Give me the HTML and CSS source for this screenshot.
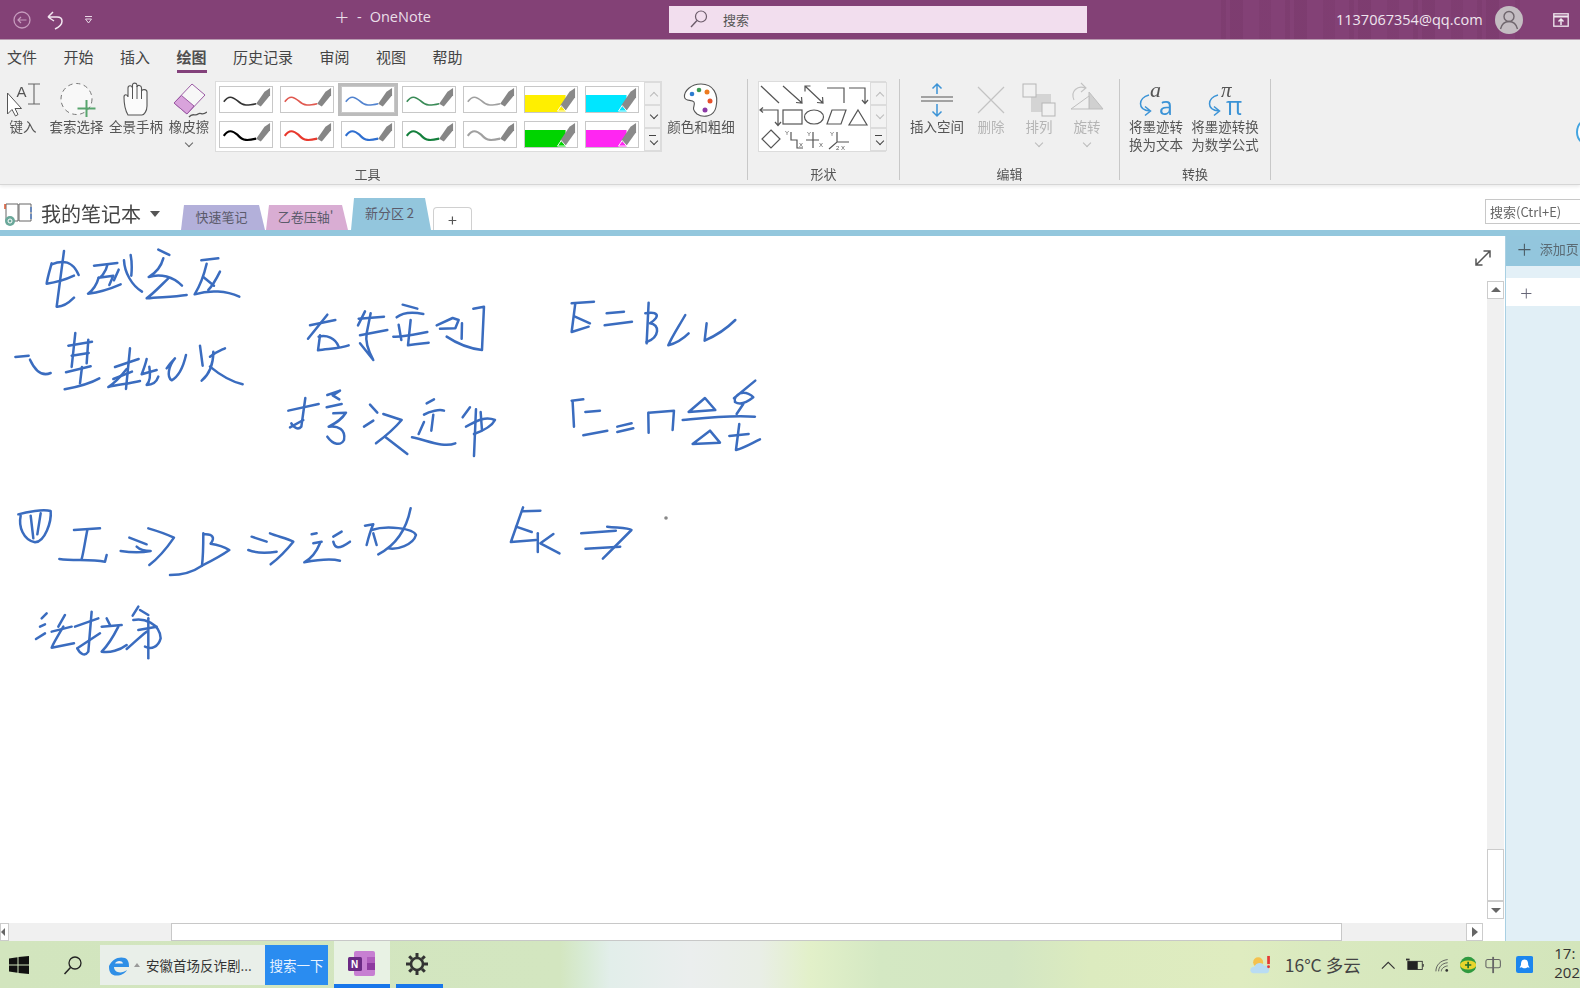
FILE: index.html
```html
<!DOCTYPE html>
<html lang="zh-CN">
<head>
<meta charset="utf-8">
<title>OneNote</title>
<link rel="stylesheet" href="styles.css">
</head>
<body>
<svg class="defs" width="0" height="0">
  <symbol id="nib" viewBox="0 0 54 27">
    <path d="M37 20 L47 5 L53 1 L53 11 L43 25 Z" fill="#8a8a8a"/>
    <path d="M34 26 L38 20 L43 26 Z" fill="none" stroke="#fff" stroke-width="1"/>
  </symbol>
  <symbol id="pen" viewBox="0 0 54 27">
    <path d="M3 16 C8 9 12 10 18 15 C24 21 29 20 38 18" fill="none" stroke="currentColor" stroke-width="1.700"/>
    <path d="M38 18 L47 5 L53 1 L53 9 L43 21 Z" fill="#868686"/>
  </symbol>
  <symbol id="penb" viewBox="0 0 54 27">
    <path d="M3 15 C8 8 12 9 18 14 C24 21 29 20 38 18" fill="none" stroke="currentColor" stroke-width="2.400"/>
    <path d="M38 18 L47 5 L53 1 L53 9 L43 21 Z" fill="#868686"/>
  </symbol>
</svg>

<div class="app">
  <header class="titlebar">
    <div class="qat">
      <svg class="ic-back" width="20" height="20" viewBox="0 0 20 20"><circle cx="10" cy="10" r="8" fill="none" stroke="#c69bbd" stroke-width="1.300"/><path d="M14.500 10H6M9 7L6 10L9 13" fill="none" stroke="#c69bbd" stroke-width="1.200"/></svg>
      <svg class="ic-undo" width="20" height="20" viewBox="0 0 20 20"><path d="M2 7L7 2M2 7L8 11M2 7H11C17 7 19 14 9 19" fill="none" stroke="#f2e6f0" stroke-width="1.500"/></svg>
      <svg class="ic-more" width="10" height="10" viewBox="0 0 10 10"><path d="M1 1.500H8M1.500 4H7.500L4.500 8Z" fill="none" stroke="#e8d8e6" stroke-width="1"/></svg>
    </div>
    <div class="doc-title"><span class="title-plus">+</span><span>-</span><span>OneNote</span></div>
    <div class="searchbox">
      <svg width="20" height="20" viewBox="0 0 20 20"><circle cx="12" cy="7.500" r="5.500" fill="none" stroke="#6c5c6a" stroke-width="1.200"/><path d="M8 11.500L2 18" stroke="#6c5c6a" stroke-width="1.400"/></svg>
      <span>搜索</span>
    </div>
    <div class="title-right">
      <div class="stripes"></div>
      <span class="email">1137067354@qq.com</span>
      <svg class="avatar" width="28" height="28" viewBox="0 0 28 28"><circle cx="14" cy="14" r="14" fill="#c4bdc2"/><circle cx="14" cy="10.500" r="5" fill="none" stroke="#6f666d" stroke-width="1.400"/><path d="M5.500 23C7 17 10.500 15.500 14 15.500S21 17 22.500 23" fill="none" stroke="#6f666d" stroke-width="1.400"/></svg>
      <svg class="present" width="16" height="14" viewBox="0 0 16 14"><rect x=".8" y=".8" width="14.400" height="12.400" fill="none" stroke="#f0e8ef" stroke-width="1.300"/><path d="M1 3.500H15" stroke="#f0e8ef" stroke-width="2"/><path d="M8 12V6M5.500 8.500L8 6L10.500 8.500" fill="none" stroke="#f0e8ef" stroke-width="1.500"/></svg>
    </div>
  </header>

  <nav class="tabs">
    <span>文件</span><span>开始</span><span>插入</span><span class="active">绘图</span><span>历史记录</span><span>审阅</span><span>视图</span><span>帮助</span>
  </nav>

  <section class="ribbon">
    <div class="group g-tools">
      <div class="group-body">
        <div class="tools">
          <div class="tool">
            <svg width="36" height="36" viewBox="0 0 36 36"><path d="M2.500 11V32L7 27.500L10.500 34L13 32.500L10 26.500H16.500Z" fill="#fff" stroke="#555" stroke-width="1"/><text x="11.500" y="15" class="svgt" font-size="15">A</text><path d="M23 2H35M29 2V22M23 22H35" fill="none" stroke="#666" stroke-width="1.100"/></svg>
            <span>键入</span>
          </div>
          <div class="tool tool-lasso">
            <svg width="38" height="36" viewBox="0 0 38 36"><circle cx="18.500" cy="17" r="15.500" fill="#f8f8f8" stroke="#777" stroke-width="1" stroke-dasharray="4.500 3.500"/><path d="M28.500 18V35M19.500 26.500H37.500" stroke="#58a56e" stroke-width="2"/></svg>
            <span>套索选择</span>
          </div>
          <div class="tool">
            <svg width="26" height="36" viewBox="0 0 26 36"><path d="M5 33C2 28 1 24 1 15C1 12 4.500 12 5 15V6C5 3 9 3 9.500 6V3C9.500 0.500 13.500 0.500 14 3V5C14.500 2.500 18.500 3 18.500 6V9C19 7 24 7 24 10V24C24 29 21 33 19 33Z" fill="#fbfbfb" stroke="#555" stroke-width="1.100"/><path d="M9.500 6V17M14 4V17M18.500 7V17" stroke="#555" stroke-width="1"/></svg>
            <span>全景手柄</span>
          </div>
          <div class="tool tool-drop">
            <svg width="36" height="36" viewBox="0 0 36 36"><path d="M3 21L21 2L34 13L16 32Z" fill="#f7f7f7" stroke="#9a5aa3" stroke-width="1"/><path d="M3 21L10.500 13.500L23 24L16 32Z" fill="#d9a3dc" stroke="#9a5aa3" stroke-width="1"/><path d="M18 35C22 30 24 35 27 32C30 30 31 34 36 30" fill="none" stroke="#555" stroke-width="1.300"/></svg>
            <span>橡皮擦</span>
            <i class="chev"></i>
          </div>
        </div>

        <div class="gallery pens">
          <div class="swatches">
            <div class="pen c-black"><svg><use href="#pen"/></svg></div>
            <div class="pen c-red"><svg><use href="#pen"/></svg></div>
            <div class="pen c-blue selected"><svg><use href="#pen"/></svg></div>
            <div class="pen c-green"><svg><use href="#pen"/></svg></div>
            <div class="pen c-gray"><svg><use href="#pen"/></svg></div>
            <div class="pen hi yellow"><svg><use href="#nib"/></svg></div>
            <div class="pen hi cyan"><svg><use href="#nib"/></svg></div>
            <div class="pen thick c-black"><svg><use href="#penb"/></svg></div>
            <div class="pen c-red2"><svg><use href="#penb"/></svg></div>
            <div class="pen c-blue2"><svg><use href="#penb"/></svg></div>
            <div class="pen c-green2"><svg><use href="#penb"/></svg></div>
            <div class="pen c-gray"><svg><use href="#penb"/></svg></div>
            <div class="pen hi lime"><svg><use href="#nib"/></svg></div>
            <div class="pen hi magenta"><svg><use href="#nib"/></svg></div>
          </div>
          <div class="gal-scroll">
            <b class="up"></b><b class="down"></b><b class="more"></b>
          </div>
        </div>

        <div class="tool tool-color">
          <svg width="36" height="36" viewBox="0 0 36 36"><path d="M18 2C8 2 1 9 1.500 15C2 20 9 17 11 20C13 24 7 26 14 32C20 36 31 35 33 25C36 12 30 2 18 2Z" fill="#fff" stroke="#555" stroke-width="1.100"/><circle cx="9" cy="12" r="2.300" fill="#2e7cd0"/><circle cx="16" cy="8" r="2.300" fill="#3b9a53"/><circle cx="24" cy="10" r="2.500" fill="#ec7a1e"/><circle cx="27" cy="19" r="2.500" fill="#e8502a"/><circle cx="22" cy="28" r="2.500" fill="#8c3aa6"/></svg>
          <span>颜色和粗细</span>
        </div>
      </div>
      <div class="group-label label-tools">工具</div>
    </div>

    <div class="group g-shapes">
      <div class="group-body">
        <div class="gallery shapes">
          <svg class="shape-art" width="111" height="70" viewBox="0 0 111 70">
            <g fill="none" stroke="#555" stroke-width="1.200">
              <path d="M2 4L20 21"/>
              <path d="M24 4L43 21M37 20.500L43 21L42.500 15"/>
              <path d="M46 4L64 21M46 9.500V4H51.500M58 20.500L64 21L63.500 15"/>
              <path d="M68 6H85V21"/>
              <path d="M90 6H106V21M103 18L106 21.500L109 18"/>
              <path d="M2 28H19V43M4 25.500L1 28L4 30.500M16 40L19 43.500L22 40"/>
              <rect x="24" y="28" width="19" height="14"/>
              <ellipse cx="55" cy="35" rx="9.500" ry="7"/>
              <path d="M73 28H87L82 42H68Z"/>
              <path d="M99 28L108 43H90Z"/>
              <path d="M12 48L21 57L12 66L3 57Z"/>
              <path d="M32 50V58H38V66H44"/>
              <path d="M54 50V66M47 58H60"/>
              <path d="M78 50V60M70 67L78 60H90"/>
            </g>
            <g class="svgt" font-size="6"><text x="26" y="53">Y</text><text x="40" y="65">X</text><text x="48" y="54">Y</text><text x="60" y="65">X</text><text x="71" y="54">Y</text><text x="77" y="68">2</text><text x="82" y="68">X</text></g>
          </svg>
          <div class="gal-scroll">
            <b class="up"></b><b class="down dim"></b><b class="more"></b>
          </div>
        </div>
      </div>
      <div class="group-label">形状</div>
    </div>

    <div class="group g-edit">
      <div class="group-body edit-body">
        <div class="tool tool-insert">
          <svg width="36" height="36" viewBox="0 0 36 36"><path d="M2 15H34M2 19H34" stroke="#888" stroke-width="1.500"/><path d="M18 12V2M13.500 6.500L18 2L22.500 6.500M18 22V34M13.500 29.500L18 34L22.500 29.500" fill="none" stroke="#3b93d6" stroke-width="1.500"/></svg>
          <span>插入空间</span>
        </div>
        <div class="tool dis tool-del">
          <svg width="36" height="36" viewBox="0 0 36 36"><path d="M5 5L31 31M31 5L5 31" stroke="#c3c3c3" stroke-width="1.200"/></svg>
          <span>删除</span>
        </div>
        <div class="tool dis tool-arr">
          <svg width="36" height="36" viewBox="0 0 36 36"><rect x="10" y="12" width="20" height="18" fill="#d4d4d4"/><rect x="2" y="2" width="13" height="13" fill="#f1f1f1" stroke="#b5b5b5"/><rect x="21" y="21" width="13" height="13" fill="#f1f1f1" stroke="#b5b5b5"/></svg>
          <span>排列</span>
          <i class="chev light"></i>
        </div>
        <div class="tool dis tool-rot">
          <svg width="36" height="36" viewBox="0 0 36 36"><path d="M20 10L34 27H20Z" fill="#d0d0d0" stroke="#bdbdbd"/><path d="M2 27L20 27L20 14Z" fill="#f0f0f0" stroke="#bdbdbd"/><path d="M5 18C1 9 9 3 16 6M12 1L17 6L12 10" fill="none" stroke="#c3c3c3" stroke-width="1.100"/></svg>
          <span>旋转</span>
          <i class="chev light"></i>
        </div>
      </div>
      <div class="group-label">编辑</div>
    </div>

    <div class="group g-convert">
      <div class="group-body conv-body">
        <div class="tool">
          <svg class="conv-ic" width="38" height="36" viewBox="0 0 38 36"><text x="13" y="15" class="conv-a" font-size="22">a</text><path d="M12 13C1 16 0 28 13 29M8 24.500L13.500 29L8 33.500" fill="none" stroke="#3b93d6" stroke-width="1.500"/><text x="22" y="33" class="conv-b" font-size="25">a</text></svg>
          <span>将墨迹转<br>换为文本</span>
        </div>
        <div class="tool">
          <svg class="conv-ic" width="38" height="36" viewBox="0 0 38 36"><text x="15" y="15" class="conv-a" font-size="21">π</text><path d="M12 13C1 16 0 28 13 29M8 24.500L13.500 29L8 33.500" fill="none" stroke="#3b93d6" stroke-width="1.500"/><text x="20" y="33" class="conv-b" font-size="25">π</text></svg>
          <span>将墨迹转换<br>为数学公式</span>
        </div>
      </div>
      <div class="group-label">转换</div>
    </div>
    <div class="round-btn"></div>
  </section>

  <section class="notebar">
    <div class="notebook">
      <svg width="29" height="24" viewBox="0 0 29 24"><path d="M2 2H14V19H2ZM15 2H27V19H15Z" fill="#fff" stroke="#666" stroke-width="1"/><path d="M1 2V7" stroke="#d9542f" stroke-width="1.500"/><path d="M27 5V10M27 12V17" stroke="#3b6fc1" stroke-width="1.200"/><circle cx="6" cy="19" r="5" fill="#6aa89a"/><circle cx="6" cy="19" r="2" fill="none" stroke="#fff"/></svg>
      <span class="nb-name">我的笔记本</span>
      <i class="caret"></i>
    </div>
    <div class="sections">
      <div class="sec purple">快速笔记</div>
      <div class="sec pink">乙卷压轴'</div>
      <div class="sec blue">新分区 2</div>
      <div class="sec add">+</div>
    </div>
    <div class="find">搜索(Ctrl+E)</div>
  </section>
  <div class="accent"></div>

  <main class="main">
    <div class="page">
      <div class="canvas">
        <svg class="ink" viewBox="0 236 1483 687" preserveAspectRatio="none">
          <g transform="translate(0 235) scale(.3333)">
            <path d="M192 48L170 215C186 216 206 204 222 188"/>
            <path d="M155 85C148 110 142 130 140 146C170 142 205 130 222 122"/>
            <path d="M155 88C190 74 218 78 236 120"/>
            <path d="M282 92L352 84"/><path d="M322 90C318 110 302 130 296 128L340 122L328 150"/><path d="M296 128C290 150 280 165 264 176C298 172 330 162 362 148"/><path d="M356 104L342 136"/>
            <path d="M372 76C374 112 394 150 426 170"/><path d="M392 60C396 80 396 100 394 122"/>
            <path d="M475 44L508 60"/><path d="M490 70C482 100 465 115 446 126C482 114 520 126 546 152"/><path d="M505 130C482 152 462 174 440 190C480 186 520 186 560 180"/>
            <path d="M604 76L655 70"/><path d="M620 86C612 120 600 152 584 178C630 164 680 168 718 185"/><path d="M610 126L642 152"/><path d="M660 110C650 130 640 150 625 165"/>
            <path d="M46 366L86 362"/><path d="M90 374C104 404 124 426 152 414"/>
            <path d="M226 294L215 396"/><path d="M265 314L260 385"/><path d="M205 332L276 320"/><path d="M215 362L266 354"/><path d="M198 412L272 394"/><path d="M246 396L240 445"/><path d="M194 463C230 456 270 446 298 430"/>
            <path d="M345 396L416 372"/><path d="M390 340L378 462"/><path d="M380 402C362 425 342 445 325 456C350 450 385 446 420 438"/><path d="M340 432L396 410"/>
            <path d="M440 372C436 390 430 405 425 418L470 405"/><path d="M448 395C452 420 450 440 440 450C460 450 470 440 475 425"/>
            <path d="M500 400C510 385 520 375 525 370C505 395 500 425 515 436C535 425 550 395 558 360"/>
            <path d="M600 332L608 392"/><path d="M630 365C650 350 665 345 675 340"/><path d="M640 350C640 395 625 420 605 437"/><path d="M630 395C660 420 695 440 728 448"/>
          </g>
          <g transform="translate(270 280) scale(.3333)">
            <path d="M172 104L114 176"/><path d="M120 136L196 120"/><path d="M150 166L144 211C175 206 210 206 236 196"/><path d="M146 170C170 164 196 174 206 200"/>
            <path d="M285 94L264 136"/><path d="M266 116L342 110"/><path d="M270 166L352 150"/><path d="M302 100L290 160C284 192 300 222 310 240L270 190"/>
            <path d="M398 74L442 86"/><path d="M380 112C400 96 430 96 460 102"/><path d="M370 170C400 172 440 162 472 156"/><path d="M422 120L414 196C440 192 460 190 476 188"/><path d="M386 134L394 180"/>
            <path d="M500 136L548 114L566 120L556 145L510 146"/><path d="M576 130L575 176"/><path d="M610 86L642 80L636 210C600 206 560 190 530 170"/>
            <path d="M905 70L972 65"/><path d="M916 70L905 156L956 140"/><path d="M915 110L960 130"/><path d="M1010 100L1062 95"/><path d="M1004 136L1086 125"/>
            <path d="M1136 68L1130 190"/><path d="M1126 100C1160 94 1176 106 1140 130C1170 132 1170 172 1130 186"/>
            <path d="M1246 105C1226 140 1206 170 1195 196C1216 190 1240 176 1256 160"/>
            <path d="M1310 130L1304 182C1340 166 1376 140 1396 120"/>
            <path d="M55 392L146 372"/><path d="M106 354L94 440C84 452 70 442 64 430"/><path d="M60 442L100 420"/>
            <path d="M172 345L210 332L188 346L208 358"/><path d="M170 382L215 372"/><path d="M190 400L228 398C215 420 195 430 176 440C205 436 228 450 222 480C212 498 190 495 172 470"/>
            <path d="M300 374L322 398"/><path d="M282 440L310 422"/><path d="M340 402L395 420C378 440 350 466 318 490"/><path d="M345 470L412 522"/>
            <path d="M470 370L492 358"/><path d="M462 404C480 392 510 388 522 392"/><path d="M490 404L484 452"/><path d="M426 472C470 480 520 505 556 490"/><path d="M462 426L446 462"/>
            <path d="M600 382L578 412"/><path d="M618 388L612 528"/><path d="M588 440C610 430 640 405 675 420C665 440 640 452 612 462"/><path d="M632 396L636 450"/>
            <path d="M905 362L940 358"/><path d="M908 366L912 440"/><path d="M946 396L990 392"/><path d="M940 466L1012 452"/>
            <path d="M1042 440L1085 430"/><path d="M1042 456L1090 445"/>
            <path d="M1135 398L1136 458M1136 398L1212 392L1208 450"/>
            <path d="M1305 354L1256 396L1336 390Z"/>
            <path d="M1238 420C1300 414 1380 404 1455 410"/>
            <path d="M1392 355L1456 302M1410 340C1430 335 1445 345 1450 352C1430 368 1410 376 1395 366C1392 355 1400 345 1410 340M1420 372L1400 402"/>
            <path d="M1320 452L1268 492L1350 488Z"/>
            <path d="M1408 432L1398 510C1420 505 1445 490 1470 478"/><path d="M1378 468L1436 462"/>
          </g>
          <g transform="translate(0 495) scale(.3333)">
            <path d="M55 58C80 50 130 42 152 48C155 80 135 140 105 142C70 135 55 95 62 62"/><path d="M92 62L100 130"/><path d="M122 55L112 118"/>
            <path d="M222 105L300 100"/><path d="M262 105C255 140 250 175 245 192"/><path d="M178 192C220 198 270 192 315 200L320 180"/>
            <path d="M388 128L440 148"/><path d="M362 168C390 172 430 172 452 168C430 168 415 160 410 155"/><path d="M445 100C480 110 505 120 522 128C500 160 475 190 448 210"/>
            <path d="M610 115C610 150 610 180 606 212C580 230 545 240 510 240"/><path d="M612 118C640 116 645 130 632 146C660 150 680 160 688 165C660 185 630 200 606 212"/>
            <path d="M755 125L800 140"/><path d="M745 165C770 175 800 175 830 170"/><path d="M810 115C835 125 860 130 880 140C860 165 835 190 812 208"/>
            <path d="M935 118L950 115"/><path d="M940 145L965 140"/><path d="M960 145C950 170 935 190 913 202C950 195 990 190 1020 197"/><path d="M1000 125L1025 110"/><path d="M1000 140C1005 160 1015 165 1050 140"/>
            <path d="M1095 92L1120 88C1110 110 1105 130 1100 150"/><path d="M1115 105C1160 90 1240 100 1248 120C1240 150 1190 165 1165 160"/><path d="M1232 40C1220 100 1190 150 1135 178"/><path d="M1120 115L1130 150"/>
            <path d="M125 370L140 355"/><path d="M120 395L135 388"/><path d="M108 432L135 415"/><path d="M195 360L175 395"/><path d="M155 410L215 395"/><path d="M190 395C175 420 160 445 155 458L222 445"/>
            <path d="M225 395L295 370"/><path d="M275 350L265 470C255 485 240 478 232 460"/><path d="M232 460L300 415"/><path d="M320 370L330 390"/><path d="M305 395L365 390"/><path d="M355 395C340 425 325 450 305 470C330 475 360 465 380 450"/>
            <path d="M415 335L398 362"/><path d="M420 345L445 360"/><path d="M400 375C430 368 480 385 482 430C475 455 455 465 435 455"/><path d="M445 370L445 490"/><path d="M415 405L470 395"/><path d="M380 462C400 445 420 425 440 410"/>
          </g>
          <g transform="translate(0 490) scale(.4337 .3333)">
            <path d="M1206 52L1178 156L1236 150"/><path d="M1206 64L1246 62"/><path d="M1190 110L1226 126"/><path d="M1240 130L1240 186"/><path d="M1276 132L1246 160L1290 190"/>
            <path d="M1340 130L1420 122"/><path d="M1350 176L1430 170"/><path d="M1400 110C1430 114 1450 114 1456 120L1390 206"/>
          </g>
          <circle class="dot" cx="666" cy="518" r="1.800"/>
        </svg>
        <svg class="expand" width="18" height="18" viewBox="0 0 18 18"><path d="M2 16L16 2M9.500 2H16V8.500M2 9.500V16H8.500" fill="none" stroke="#555" stroke-width="1.500"/></svg>
      </div>
      <div class="hscroll">
        <b class="hbtn left"></b>
        <div class="htrack"><div class="hthumb"></div></div>
        <b class="hbtn right"></b>
      </div>
    </div>
    <div class="vscroll">
      <b class="vbtn up"></b>
      <div class="vtrack"><div class="vthumb"></div></div>
      <b class="vbtn down"></b>
    </div>
    <aside class="panel">
      <div class="add-page"><span class="plus">+</span><span>添加页</span></div>
      <div class="panel-strip"></div>
      <div class="panel-row"><span class="plus2">+</span></div>
    </aside>
  </main>

  <footer class="taskbar">
    <svg class="win" width="20" height="18" viewBox="0 0 20 18"><path d="M0 2.500L8.500 1.200V8.500H0ZM9.500 1L20 0V8.500H9.500ZM0 9.500H8.500V16.800L0 15.500ZM9.500 9.500H20V18L9.500 17Z" fill="#111"/></svg>
    <svg class="tsearch" width="20" height="20" viewBox="0 0 20 20"><circle cx="12" cy="8" r="6" fill="none" stroke="#222" stroke-width="1.300"/><path d="M7.500 12.500L1.500 19" stroke="#222" stroke-width="1.500"/></svg>
    <div class="ie-item">
      <svg width="22" height="24" viewBox="0 0 22 24"><path d="M1 13C4 6 11 3 17 5C21 7 21 11 21 14H6C6 20 14 21 19 17C16 23 5 25 2 19C1 17 1 15 1 13Z" fill="#2f8fe6"/><path d="M7 10.500C8 7.500 14 7 15 10.500Z" fill="#f1f1f1"/></svg>
      <i class="tri"></i>
      <span>安徽首场反诈剧...</span>
    </div>
    <div class="baidu">搜索一下</div>
    <div class="task on-app">
      <svg width="28" height="26" viewBox="0 0 28 26"><rect x="6" y="0" width="21" height="25" rx="2" fill="#c77fd2"/><rect x="19" y="6" width="8" height="6" fill="#b05dbd"/><rect x="19" y="12" width="8" height="7" fill="#8e3aa0"/><rect x="0" y="6" width="14" height="14" rx="1.500" fill="#6b2a84"/><text x="3" y="17" class="n-letter" font-size="10">N</text></svg>
    </div>
    <div class="task gear-app">
      <svg width="22" height="22" viewBox="0 0 22 22"><circle cx="11" cy="11" r="6" fill="none" stroke="#333" stroke-width="2.600"/><path d="M11 0V4M11 18V22M0 11H4M18 11H22M3.200 3.200L6 6M16 16L18.800 18.800M18.800 3.200L16 6M6 16L3.200 18.800" stroke="#333" stroke-width="3"/></svg>
    </div>
    <div class="tray">
      <svg width="24" height="22" viewBox="0 0 24 22"><circle cx="9" cy="8" r="5.500" fill="#f5c14d"/><path d="M4 20C-1 20 -1 13 5 13C6 8 14 7 16 12C22 11 23 20 18 20Z" fill="#b9dcf3"/><path d="M20.500 1V10" stroke="#e53935" stroke-width="3"/><circle cx="20.500" cy="13" r="1.600" fill="#e53935"/></svg>
      <span class="weather">16°C 多云</span>
      <svg class="t-chev" width="16" height="10" viewBox="0 0 16 10"><path d="M1 9L8 2L15 9" fill="none" stroke="#333" stroke-width="1.300"/></svg>
      <svg class="t-bat" width="20" height="13" viewBox="0 0 20 13"><rect x="2" y="3" width="16" height="9" fill="none" stroke="#333"/><rect x="2" y="3" width="11" height="9" fill="#222"/><path d="M19 6V9" stroke="#333" stroke-width="1.200"/><path d="M0 1H4" stroke="#333" stroke-width="2"/></svg>
      <svg class="t-wifi" width="16" height="16" viewBox="0 0 16 16"><path d="M1 15C1 8 6 3 14 2M4 15C4 10 8 6 14 5.500M7 15C7 12 10 9.500 14 9" fill="none" stroke="#555" stroke-width="1"/><circle cx="13" cy="14" r="1.500" fill="#333"/></svg>
      <svg class="t-360" width="18" height="18" viewBox="0 0 18 18"><circle cx="9" cy="9" r="9" fill="#2f9a3f"/><path d="M0 9A9 5 0 0 1 18 9A9 5 0 0 1 0 9" fill="#e8d52c"/><path d="M9 5.500V12.500M5.500 9H12.500" stroke="#1f6f2d" stroke-width="1.800"/></svg>
      <svg class="t-ime" width="18" height="18" viewBox="0 0 18 18"><rect x="1" y="3" width="16" height="9" rx="2" fill="none" stroke="#666" stroke-width="1.200"/><path d="M9 0V18" stroke="#666" stroke-width="2"/></svg>
      <svg class="t-qq" width="19" height="19" viewBox="0 0 19 19"><rect width="19" height="19" rx="2.500" fill="#1c86ee"/><path d="M9.500 4C13 4 13.500 7.500 13.500 10L15 13L12.500 12.500C11.500 14 7.500 14 6.500 12.500L4 13L5.500 10C5.500 7.500 6 4 9.500 4Z" fill="#fff"/></svg>
      <div class="clock">17:<br>202</div>
    </div>
  </footer>
</div>
</body>
</html>
```

FILE: styles.css
```css
* { box-sizing: border-box; }
html, body { margin: 0; height: 100%; overflow: hidden; background: #fff; }
body { font-family: "Noto Sans CJK SC", "Open Sans", sans-serif; color: #444; }
.defs { display: none; }
.app { width: 1580px; height: 988px; display: flex; flex-direction: column; position: relative; overflow: hidden; filter: blur(.45px); }

/* title bar */
.titlebar { height: 40px; flex: none; background: #834176; border-bottom: 1px solid #b89ab0; display: flex; align-items: center; position: relative; }
.qat { width: 322px; flex: none; display: flex; align-items: center; padding-left: 12px; }
.ic-undo { margin-left: 14px; }
.ic-more { margin-left: 18px; }
.doc-title { width: 347px; flex: none; display: flex; align-items: center; gap: 8px; padding-left: 13px; margin-top: -6px; color: #eadfe8; font: 14.500px "Open Sans", sans-serif; }
.title-plus { font-size: 24px; font-weight: 300; line-height: 1; width: 14px; }
.searchbox { width: 418px; height: 27px; flex: none; background: #f2deee; display: flex; align-items: center; padding-left: 20px; gap: 14px; color: #555; font-size: 13px; margin-top: -1px; }
.title-right { flex: 1; display: flex; align-items: center; height: 100%; position: relative; }
.stripes { position: absolute; left: 134px; right: 60px; top: 0; bottom: 0; background: repeating-linear-gradient(90deg, #7a3a6c 0 5px, transparent 5px 9px, #79396b 9px 22px, transparent 22px 38px, #7c3b6e 38px 50px, transparent 50px 64px); opacity: .55; }
.email { position: relative; margin-left: 249px; color: #efe5ee; font: 14.500px "Open Sans", sans-serif; white-space: nowrap; }
.avatar { position: relative; margin-left: 12px; flex: none; }
.present { position: relative; margin-left: 30px; flex: none; }

/* ribbon tabs */
.tabs { height: 36px; flex: none; background: #f0f0f0; display: flex; gap: 26.500px; padding-left: 7px; align-items: flex-start; font-size: 15px; color: #444; line-height: 21px; }
.tabs span { padding-top: 6px; height: 34px; }
.tabs .active { font-weight: 700; color: #4f4f4f; border-bottom: 3px solid #83417b; height: 33px; }

/* ribbon */
.ribbon { height: 109px; flex: none; background: #f0f0f0; border-bottom: 1px solid #d6d6d6; display: flex; box-shadow: 0 2px 3px rgba(0,0,0,.07); position: relative; z-index: 2; }
.group { height: 101px; margin-top: 3px; display: flex; flex-direction: column; border-right: 1px solid #c8c8c8; flex: none; }
.g-tools { width: 748px; }
.g-shapes { width: 152px; }
.g-edit { width: 220px; }
.g-convert { width: 151px; }
.group-body { height: 84px; flex: none; display: flex; align-items: flex-start; }
.group-label { height: 17px; line-height: 22px; text-align: center; font-size: 13px; color: #555; }
.label-tools { padding-right: 12px; }
.round-btn { position: absolute; left: 1576px; top: 41px; width: 30px; height: 30px; border-radius: 50%; border: 2px solid #44a5e0; background: #fff; }

.tool { display: flex; flex-direction: column; align-items: center; font-size: 13.500px; line-height: 17.500px; color: #555; text-align: center; white-space: nowrap; }
.tool svg { display: block; height: 36px; margin-top: 3px; margin-bottom: 0; }
.tool .conv-ic { overflow: visible; }
.tools { display: grid; grid-template-columns: 36px 59px 56px 42px; column-gap: 4px; padding-left: 5px; width: 212px; flex: none; }
.tool-lasso { margin-left: 4px; }
.chev { display: block; width: 6px; height: 6px; border-right: 1.300px solid #666; border-bottom: 1.300px solid #666; transform: rotate(45deg); margin-top: 4px; }
.chev.light { border-color: #bbb; }
.tool.dis { color: #b5b5b5; }

.gallery { display: flex; background: #fff; border: 1px solid #dcdcdc; height: 71px; flex: none; margin-top: 2px; }
.pens { width: 447px; margin-left: 3px; }
.swatches { display: grid; grid-template-columns: repeat(7, 54px); grid-auto-rows: 27px; gap: 8px 7px; padding: 4px 3px; width: 429px; }
.pen { border: 1px solid #c8c8c8; background: #fff; position: relative; overflow: hidden; }
.pen svg { width: 100%; height: 100%; display: block; position: relative; }
.pen.selected { outline: 3px solid #bcbcbc; outline-offset: 0; overflow: visible; }
.c-black { color: #333; } .c-red { color: #e0584f; } .c-blue { color: #5283cf; } .c-green { color: #3a8b57; } .c-gray { color: #a0a0a0; }
.c-red2 { color: #e8392d; } .c-blue2 { color: #2f6fd0; } .c-green2 { color: #15803d; }
.thick.c-black { color: #000; }
.hi { background-repeat: no-repeat; background-size: 78% 68%; background-position: left bottom; }
.yellow { background-image: linear-gradient(#ffef00, #ffef00); }
.cyan { background-image: linear-gradient(#00e6ff, #00e6ff); }
.lime { background-image: linear-gradient(#00d400, #00d400); }
.magenta { background-image: linear-gradient(#ff26f2, #ff26f2); }

.gal-scroll { width: 17px; flex: none; margin-left: auto; display: flex; flex-direction: column; background: #f2f2f2; }
.gal-scroll b { flex: 1; border: 1px solid #dcdcdc; position: relative; display: block; }
.gal-scroll b::after { content: ""; position: absolute; left: 5.500px; width: 5px; height: 5px; border-right: 1.300px solid #444; border-bottom: 1.300px solid #444; top: 6px; transform: rotate(45deg); }
.gal-scroll .up::after { transform: rotate(225deg); top: 10px; border-color: #bbb; }
.gal-scroll .down.dim::after { border-color: #bbb; }
.gal-scroll .more::after { top: 9px; }
.gal-scroll .more::before { content: ""; position: absolute; left: 4px; right: 4px; top: 6px; height: 1px; background: #444; }

.tool-color { width: 76px; margin-left: 1px; flex: none; }

.shapes { width: 128px; margin-left: 10px; }
.shape-art { flex: none; display: block; }
.svgt { font-family: "Liberation Sans", sans-serif; fill: #555; stroke: none; }

.tool-insert { margin-left: 9px; width: 56px; }
.tool-del { margin-left: 6px; width: 40px; }
.tool-arr { margin-left: 8px; width: 40px; }
.tool-rot { margin-left: 8px; width: 40px; }

.conv-body { padding-left: 5px; gap: 3px; }
.conv-body .tool:first-child { width: 62px; }
.conv-body .tool:last-child { width: 70px; }
.conv-a { font-family: "Liberation Serif", serif; font-style: italic; fill: #555; }
.conv-b { font-family: "Open Sans", sans-serif; fill: #3b93d6; }

/* notebook row */
.notebar { height: 45px; flex: none; background: #fff; display: flex; align-items: flex-end; position: relative; }
.notebook { width: 181px; flex: none; display: flex; align-items: center; padding: 3px 0 0 4px; height: 36px; }
.nb-name { font-size: 20px; color: #444; margin-left: 8px; line-height: 24px; }
.caret { width: 0; height: 0; border: 5.500px solid transparent; border-top: 6px solid #555; border-bottom: 0; margin-left: 9px; }
.sections { display: flex; align-items: flex-end; gap: 1px; }
.sec { height: 25px; font-size: 13px; line-height: 24px; text-align: center; color: #5b5b6b; width: 84px; clip-path: polygon(3px 0, calc(100% - 6px) 0, 100% 100%, 0 100%); padding-right: 3px; }
.purple { background: #b3b0da; }
.pink { background: #d9add3; width: 82px; }
.blue { background: #93c6dd; height: 32px; line-height: 30px; width: 80px; margin-left: 2px; }
.add { background: #fff; border: 1px solid #d0d0d0; border-bottom: 0; border-radius: 4px 4px 0 0; clip-path: none; width: 39px; height: 23px; line-height: 22px; font-size: 16px; color: #555; margin-left: 1px; padding: 0; }
.find { position: absolute; left: 1485px; right: -2px; top: 14px; height: 25px; border: 1px solid #c8c8c8; font-size: 13px; line-height: 23px; color: #666; padding-left: 4px; }
.accent { height: 6px; flex: none; background: #93c7dd; }

/* main */
.main { flex: 1; min-height: 0; display: flex; background: #fff; position: relative; }
.page { width: 1483px; flex: none; display: flex; flex-direction: column; }
.canvas { flex: 1; min-height: 0; position: relative; }
.ink { display: block; width: 100%; height: 100%; }
.ink path { fill: none; stroke: #3a6cbf; stroke-width: 2.500; stroke-linecap: round; stroke-linejoin: round; vector-effect: non-scaling-stroke; }
.dot { fill: #888; }
.expand { position: absolute; left: 1474px; top: 13px; }
.hscroll { height: 18px; flex: none; display: flex; background: #f0f0f0; }
.hbtn { width: 9px; flex: none; background: #fff; border: 1px solid #ccc; position: relative; display: block; }
.hbtn.left::after { content: ""; position: absolute; left: 0; top: 4px; border: 4px solid transparent; border-right: 4px solid #666; border-left: 0; }
.hbtn.right { width: 17px; }
.hbtn.right::after { content: ""; position: absolute; left: 5px; top: 3px; border: 5px solid transparent; border-left: 6px solid #666; border-right: 0; }
.htrack { flex: 1; padding-left: 162px; padding-right: 124px; }
.hthumb { height: 100%; background: #fff; border: 1px solid #c8c8c8; }
.vscroll { width: 17px; flex: none; margin: 45px 0 22px 3.500px; display: flex; flex-direction: column; background: #f0f0f0; }
.vbtn { height: 18px; flex: none; background: #fff; border: 1px solid #ccc; position: relative; display: block; }
.vbtn.up::after { content: ""; position: absolute; left: 3px; top: 5px; border: 5px solid transparent; border-bottom: 5px solid #666; border-top: 0; }
.vbtn.down::after { content: ""; position: absolute; left: 3px; top: 6px; border: 5px solid transparent; border-top: 5px solid #666; border-bottom: 0; }
.vtrack { flex: 1; display: flex; flex-direction: column; justify-content: flex-end; }
.vthumb { height: 52px; background: #fff; border: 1px solid #ccc; }
.panel { flex: 1; margin-left: 1.500px; background: #e1eff6; border-left: 1px solid #a9d0e3; display: flex; flex-direction: column; overflow: hidden; }
.add-page { height: 30px; flex: none; background: #93c6dd; display: flex; align-items: center; padding: 0 0 5px 11px; gap: 8px; font-size: 13px; color: #5a6a73; white-space: nowrap; }
.plus { font: 300 26px/26px "Open Sans", sans-serif; color: #4c5c66; }
.panel-strip { height: 12px; flex: none; background: #e3f0f7; }
.panel-row { height: 28px; flex: none; background: #fff; padding-left: 14px; }
.plus2 { font: 300 22px/28px "Open Sans", sans-serif; color: #667; }

/* taskbar */
.taskbar { height: 47px; flex: none; display: flex; align-items: center; position: relative; background: linear-gradient(90deg, #d2e5be 0, #d3e6c0 560px, #d8ebd5 585px, #e2eeea 610px, #ebeeee 690px, #e9eee6 760px, #e2f0c9 810px, #d4e8c3 880px, #d3e6c3 1010px, #dcebbf 1090px, #dfecc0 1240px, #d9e9bf 1320px, #d3e5bb 1580px); }
.win { margin-left: 9px; flex: none; }
.tsearch { margin-left: 34px; flex: none; }
.ie-item { margin-left: 17px; width: 165px; height: 40px; flex: none; background: #e9efe9; display: flex; align-items: center; padding-left: 8px; font-size: 13.500px; color: #333; white-space: nowrap; }
.tri { width: 0; height: 0; border: 3px solid transparent; border-bottom: 4px solid #999; border-top: 0; margin-left: 4px; margin-right: 6px; }
.baidu { width: 63px; height: 40px; flex: none; background: #2a8cf0; color: #e8f3ff; font-size: 13.500px; line-height: 40px; text-align: center; }
.task { height: 47px; flex: none; display: flex; align-items: center; justify-content: center; border-bottom: 4px solid #1877ea; padding-top: 2px; }
.on-app { width: 56px; margin-left: 6px; background: #e8f2e4; }
.gear-app { width: 47px; margin-left: 5.500px; padding-right: 4px; }
.n-letter { font-family: "Liberation Sans", sans-serif; font-weight: 700; fill: #fff; }
.tray { margin-left: auto; display: flex; align-items: center; flex: none; width: 330px; }
.weather { font-size: 17.500px; color: #444; margin-left: 13px; white-space: nowrap; width: 106px; }
.t-bat { margin-left: 11px; }
.t-wifi { margin-left: 11px; }
.t-360 { margin-left: 10px; }
.t-ime { margin-left: 9px; }
.t-qq { margin-left: 15px; }
.clock { font: 15px/19px "Open Sans", sans-serif; color: #333; margin: -4px 0 0 21px; white-space: nowrap; }
```
